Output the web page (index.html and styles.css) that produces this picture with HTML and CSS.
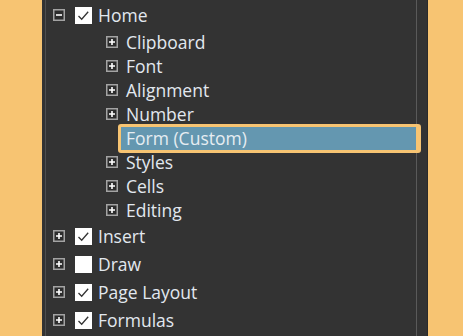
FILE: index.html
```html
<!DOCTYPE html>
<html lang="en">
<head>
<meta charset="UTF-8" />
<meta name="viewport" content="width=device-width, initial-scale=1" />
<title>Customize Ribbon</title>
<link rel="stylesheet" href="styles.css">
</head>
<body>

<div class="window">
  <div class="tree">

    <div class="row top first">
      <span class="toggle"><svg viewBox="0 0 12 12"><rect x="0.75" y="0.75" width="10.5" height="10.5"/><path d="M3 6h6"/></svg></span>
      <span class="check"><svg viewBox="0 0 17 17"><path d="M3.5 9l3.2 3.2 6.5-7.5"/></svg></span>
      <span class="label">Home</span>
    </div>

    <div class="group">
      <div class="row child">
        <span class="toggle"><svg viewBox="0 0 12 12"><rect x="0.75" y="0.75" width="10.5" height="10.5"/><path d="M3 6h6M6 3v6"/></svg></span>
        <span class="label">Clipboard</span>
      </div>
      <div class="row child">
        <span class="toggle"><svg viewBox="0 0 12 12"><rect x="0.75" y="0.75" width="10.5" height="10.5"/><path d="M3 6h6M6 3v6"/></svg></span>
        <span class="label">Font</span>
      </div>
      <div class="row child">
        <span class="toggle"><svg viewBox="0 0 12 12"><rect x="0.75" y="0.75" width="10.5" height="10.5"/><path d="M3 6h6M6 3v6"/></svg></span>
        <span class="label">Alignment</span>
      </div>
      <div class="row child">
        <span class="toggle"><svg viewBox="0 0 12 12"><rect x="0.75" y="0.75" width="10.5" height="10.5"/><path d="M3 6h6M6 3v6"/></svg></span>
        <span class="label">Number</span>
      </div>
      <div class="row child">
        <span class="toggle empty"></span>
        <span class="label selected">Form (Custom)</span>
      </div>
      <div class="row child">
        <span class="toggle"><svg viewBox="0 0 12 12"><rect x="0.75" y="0.75" width="10.5" height="10.5"/><path d="M3 6h6M6 3v6"/></svg></span>
        <span class="label">Styles</span>
      </div>
      <div class="row child">
        <span class="toggle"><svg viewBox="0 0 12 12"><rect x="0.75" y="0.75" width="10.5" height="10.5"/><path d="M3 6h6M6 3v6"/></svg></span>
        <span class="label">Cells</span>
      </div>
      <div class="row child">
        <span class="toggle"><svg viewBox="0 0 12 12"><rect x="0.75" y="0.75" width="10.5" height="10.5"/><path d="M3 6h6M6 3v6"/></svg></span>
        <span class="label">Editing</span>
      </div>
    </div>

    <div class="row top">
      <span class="toggle"><svg viewBox="0 0 12 12"><rect x="0.75" y="0.75" width="10.5" height="10.5"/><path d="M3 6h6M6 3v6"/></svg></span>
      <span class="check"><svg viewBox="0 0 17 17"><path d="M3.5 9l3.2 3.2 6.5-7.5"/></svg></span>
      <span class="label">Insert</span>
    </div>
    <div class="row top">
      <span class="toggle"><svg viewBox="0 0 12 12"><rect x="0.75" y="0.75" width="10.5" height="10.5"/><path d="M3 6h6M6 3v6"/></svg></span>
      <span class="check"></span>
      <span class="label">Draw</span>
    </div>
    <div class="row top">
      <span class="toggle"><svg viewBox="0 0 12 12"><rect x="0.75" y="0.75" width="10.5" height="10.5"/><path d="M3 6h6M6 3v6"/></svg></span>
      <span class="check"><svg viewBox="0 0 17 17"><path d="M3.5 9l3.2 3.2 6.5-7.5"/></svg></span>
      <span class="label">Page Layout</span>
    </div>
    <div class="row top">
      <span class="toggle"><svg viewBox="0 0 12 12"><rect x="0.75" y="0.75" width="10.5" height="10.5"/><path d="M3 6h6M6 3v6"/></svg></span>
      <span class="check"><svg viewBox="0 0 17 17"><path d="M3.5 9l3.2 3.2 6.5-7.5"/></svg></span>
      <span class="label">Formulas</span>
    </div>

  </div>
  <div class="scroll"></div>
</div>

</body>
</html>
```

FILE: styles.css
```css
html, body {
  margin: 0;
  height: 336px;
  overflow: hidden;
}
body {
  background: #f7c472;
  font-family: "Open Sans", "Noto Sans", sans-serif;
  font-size: 17.5px;
  color: #e2e8ef;
}
.window {
  margin-left: 42px;
  width: 386px;
  height: 336px;
  box-sizing: border-box;
  display: flex;
  background: #333333;
  padding-left: 3px;
  border-right: 1px solid #2a2a2a;
}
.tree {
  width: 372px;
  box-sizing: border-box;
  border-left: 1px solid #4f4f4f;
  border-right: 1px solid #5a5a5a;
  padding-left: 7px;
}
.scroll {
  flex: 1;
}
.row {
  display: flex;
  align-items: center;
}
.top {
  height: 28px;
}
.first {
  height: 30px;
}
.child {
  height: 24px;
  padding-left: 53px;
}
.toggle {
  width: 12px;
  height: 12px;
  flex: none;
}
.toggle svg {
  display: block;
  width: 12px;
  height: 12px;
}
.toggle rect {
  fill: #2c2c2c;
  stroke: #a3a3a3;
  stroke-width: 1.5;
}
.toggle path {
  stroke: #ffffff;
  stroke-width: 1.6;
  fill: none;
}
.check {
  width: 17px;
  height: 17px;
  margin-left: 10px;
  background: #ffffff;
  flex: none;
}
.check svg {
  display: block;
  width: 17px;
  height: 17px;
}
.check path {
  fill: none;
  stroke: #333333;
  stroke-width: 1.3;
}
.label {
  border: 3px solid transparent;
  padding-left: 3px;
  line-height: 22px;
  white-space: nowrap;
}
.child .label {
  padding-left: 5px;
}
.label.selected {
  flex: 1;
  height: 29px;
  box-sizing: border-box;
  margin-right: -5px;
  border-color: #f7c472;
  border-right-width: 5px;
  border-radius: 3px;
  background: #6497b0;
  color: #e6edf2;
  position: relative;
  z-index: 1;
}
```
